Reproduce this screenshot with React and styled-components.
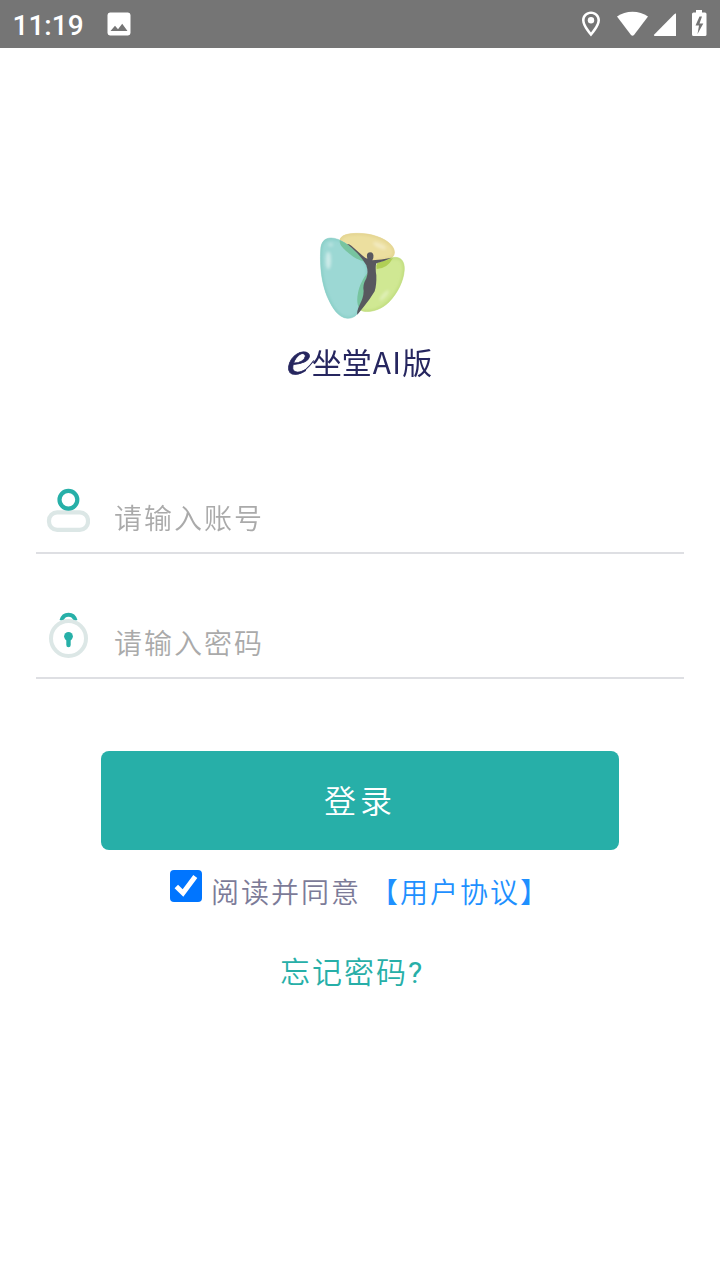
import React, { useState } from "react";
import styled, { createGlobalStyle } from "styled-components";

function Login() {
  const [account, setAccount] = useState("");
  const [password, setPassword] = useState("");
  const [agreed, setAgreed] = useState(true);

  return (
    <Page>
      <GlobalStyle />
      <StatusBar>
        <Clock>11:19</Clock>
        <PictureIcon />
        <SystemIcons />
      </StatusBar>
      <Brand>
        <Logo />
        <BrandName>
          <BrandLetter />
          坐堂<span>AI</span>版
        </BrandName>
      </Brand>
      <Form onSubmit={(e) => e.preventDefault()}>
        <Field>
          <UserIcon />
          <input
            type="text"
            placeholder="请输入账号"
            value={account}
            onChange={(e) => setAccount(e.target.value)}
          />
        </Field>
        <Field>
          <LockIcon />
          <input
            type="password"
            placeholder="请输入密码"
            value={password}
            onChange={(e) => setPassword(e.target.value)}
          />
        </Field>
        <LoginButton type="submit">登录</LoginButton>
        <Agreement>
          <Checkbox
            type="button"
            role="checkbox"
            aria-checked={agreed}
            $checked={agreed}
            onClick={() => setAgreed(!agreed)}
          >
            {agreed && (
              <svg width="32" height="32" viewBox="0 0 32 32">
                <path d="M6.300 16.500L13 23 25.300 6.400" fill="none" stroke="#fff" strokeWidth="5" />
              </svg>
            )}
          </Checkbox>
          <span>阅读并同意</span>
          <a href="#agreement">【用户协议】</a>
        </Agreement>
        <Forgot href="#forgot">
          忘记密码<span>?</span>
        </Forgot>
      </Form>
    </Page>
  );
}

const PictureIcon = () => (
  <svg width="24" height="24" viewBox="0 0 24 24">
    <path
      fill="#fff"
      fillRule="evenodd"
      d="M3 .5h18A2.600 2.600 0 0 1 23.500 3v18a2.600 2.600 0 0 1-2.500 2.500H3A2.600 2.600 0 0 1 .5 21V3A2.600 2.600 0 0 1 3 .5zM3.500 19h17l-5.300-7.200-4.200 5.400-3-3.400z"
    />
  </svg>
);

const SystemIcons = () => (
  <svg width="150" height="48" viewBox="0 0 150 48" fill="#fff">
    <path
      fillRule="evenodd"
      d="M21 11.500c-5 0-9 3.900-9 8.800 0 6.600 9 16.200 9 16.200s9-9.600 9-16.200c0-4.900-4-8.800-9-8.800zm0 2.600c3.500 0 6.400 2.700 6.400 6.200 0 3.900-4 9.300-6.400 12.200-2.400-2.900-6.400-8.300-6.400-12.200 0-3.500 2.900-6.200 6.400-6.200z"
    />
    <circle cx="21" cy="20.300" r="3.200" />
    <path d="M47 16.500C55.500 10 69.500 10 78 16.500L64 35q-1.500 1.500-3 0z" />
    <path d="M106 13.500V36H84.500q-1.200-.5 0-1.800L104 14.500q1.500-1.500 2-1z" />
    <path
      fillRule="evenodd"
      d="M126 10h6v2.500h3q1.500 0 1.500 1.500v20.500q0 1.500-1.500 1.500h-11.500q-1.500 0-1.500-1.500V14q0-1.500 1.500-1.500h2.500zM129.500 16.500L125.500 25.500h3.500l-1.500 8.500 5.800-10.500h-3.800l2.500-7z"
    />
  </svg>
);

const Logo = () => (
  <svg width="115" height="105" viewBox="0 0 345 315">
    <defs>
      <filter id="soft" x="-50%" y="-50%" width="200%" height="200%">
        <feGaussianBlur stdDeviation="4" />
      </filter>
      <clipPath id="tealShape">
        <path d={tealLobe} />
      </clipPath>
      <clipPath id="yellowShape">
        <path d={yellowLobe} />
      </clipPath>
      <clipPath id="greenShape">
        <path d={greenLobe} />
      </clipPath>
    </defs>
    <Lobe d={yellowLobe} clip="yellowShape" fill="#ecdf9f" edge="#e2d28e" />
    <Lobe d={greenLobe} clip="greenShape" fill="#d0e893" edge="#bedb7b" />
    <Lobe d={tealLobe} clip="tealShape" fill="#9cd8d4" edge="#86cdc5" />
    <g clipPath="url(#tealShape)">
      <path d={yellowLobe} fill="#77c49f" />
      <path d={greenLobe} fill="#77c49f" />
    </g>
    <path d="M215 122Q240 117 264 108Q247 140 215 141z" fill="#b0cf55" />
    <g fill="#fff" filter="url(#soft)">
      <ellipse cx="70" cy="115" rx="8" ry="27" opacity=".5" />
      <ellipse cx="77" cy="68" rx="8" ry="6" opacity=".3" />
      <ellipse cx="224" cy="71" rx="22" ry="7" opacity=".35" transform="rotate(24 224 71)" />
      <ellipse cx="238" cy="220" rx="6" ry="20" opacity=".35" transform="rotate(42 238 220)" />
    </g>
    <path
      fill="#58585f"
      d="M126 66Q133 65 140 72L173 101Q181 108 187 110Q182 92 195 91Q208 91 205 108L202 115Q228 113 260 107Q237 118 214 124Q210 137 214 160Q215 190 209 208Q193 235 178 252L157 278Q154 270 164 248Q175 229 176 207Q172 190 184 169Q191 151 184 130Q174 112 157 94Q141 77 126 66z"
    />
  </svg>
);

const Lobe = ({ d, clip, fill, edge }) => (
  <>
    <path d={d} fill={fill} stroke={edge} strokeWidth="1.500" />
    <g clipPath={`url(#${clip})`}>
      <path d={d} fill="none" stroke={edge} strokeWidth="8" filter="url(#soft)" />
    </g>
  </>
);

const tealLobe =
  "M78 48C106 48 139 74 163 99C185 121 191 136 187 157C183 184 176 215 170 247C164 275 148 290 127 289C101 287 82 260 66 222C51 184 44 137 47 84C48 59 60 48 78 48z";
const yellowLobe =
  "M104 57C105 39 129 34 160 34C199 34 239 48 258 68C271 82 272 99 260 107C245 115 217 118 185 119C158 118 124 91 109 72C105 66 104 62 104 57z";
const greenLobe =
  "M271 106C290 106 299 121 298 143C296 176 278 213 252 240C229 263 199 271 176 268C159 265 153 241 159 213C165 180 186 147 214 130C233 118 250 106 271 106z";

const BrandLetter = () => (
  <svg width="24" height="44" viewBox="0 0 24 44" overflow="visible" fill="#26265f">
    <text
      transform="translate(-2 35) skewX(-8) scale(1.060 1)"
      fontFamily="Liberation Serif, serif"
      fontStyle="italic"
      fontSize="47"
      stroke="#26265f"
      strokeWidth=".7"
    >
      e
    </text>
    <path d="M10 34.600Q17 33.500 25.800 21.500" fill="none" stroke="#26265f" strokeWidth="1.100" />
  </svg>
);

const UserIcon = () => (
  <svg width="44" height="48" viewBox="0 0 44 48" fill="none">
    <rect x="3" y="26.300" width="39" height="17.600" rx="8.200" stroke="#dce7e6" strokeWidth="4.200" />
    <circle cx="22.400" cy="13.700" r="8.900" stroke="#27b0a8" strokeWidth="4.200" />
  </svg>
);

const LockIcon = () => (
  <svg width="44" height="48" viewBox="0 0 44 48" fill="none">
    <path d="M15.500 9.500C17.500 1.700 27.500 1.700 29.500 9.500" stroke="#27b0a8" strokeWidth="4" />
    <circle cx="22.500" cy="27.500" r="17.500" stroke="#dce7e6" strokeWidth="4" />
    <circle cx="22.500" cy="25.300" r="4.400" fill="#27b0a8" />
    <path d="M22.500 26v8" stroke="#27b0a8" strokeWidth="4.400" strokeLinecap="round" />
  </svg>
);

const GlobalStyle = createGlobalStyle`
  * {
    box-sizing: border-box;
  }
  body {
    margin: 0;
    background: #fff;
    font-family: "Noto Sans CJK SC", sans-serif;
  }
  svg {
    display: block;
    flex-shrink: 0;
  }
  a {
    text-decoration: none;
  }
`;

const Page = styled.div`
  min-height: 100vh;
  background: #fff;
`;

const StatusBar = styled.header`
  display: flex;
  align-items: center;
  height: 48px;
  padding-left: 12.5px;
  background: #757575;
  > svg:last-child {
    margin-left: auto;
  }
`;

const Clock = styled.span`
  width: 94.5px;
  color: #fff;
  font: 500 28px/48px Roboto, sans-serif;
  padding-top: 3px;
`;

const Brand = styled.div`
  display: flex;
  flex-direction: column;
  align-items: center;
  padding: 174px 0 0 5px;
`;

const BrandName = styled.h1`
  display: flex;
  align-items: center;
  height: 44px;
  margin: 12px 5px 1px 0;
  color: #26265f;
  font-size: 30px;
  font-weight: 400;
  line-height: 44px;
  span {
    margin-left: 1px;
    letter-spacing: 1.2px;
  }
`;

const Form = styled.form`
  display: flex;
  flex-direction: column;
  align-items: center;
  padding: 102px 36px 0;
`;

const Field = styled.label`
  display: flex;
  width: 100%;
  height: 68px;
  margin-bottom: 57px;
  padding-left: 10px;
  border-bottom: 2px solid #dedfe3;
  input {
    flex: 1;
    height: 62px;
    margin-left: 24px;
    padding: 0;
    border: 0;
    outline: 0;
    background: transparent;
    color: #333;
    font: 350 28px/40px "Noto Sans CJK SC", sans-serif;
    letter-spacing: 2px;
  }
  input::placeholder {
    color: #aaa;
  }
`;

const LoginButton = styled.button`
  width: 518px;
  height: 99px;
  margin-top: 15px;
  padding: 0 0 4px;
  border: 0;
  border-radius: 8px;
  background: #27afa8;
  color: #fff;
  font: 350 32px/48px "Noto Sans CJK SC", sans-serif;
  letter-spacing: 4px;
  cursor: pointer;
`;

const Agreement = styled.div`
  display: flex;
  align-self: flex-start;
  margin: 20px 0 0 134px;
  color: #7c7b98;
  font-size: 28px;
  font-weight: 350;
  line-height: 42px;
  letter-spacing: 2px;
  span {
    margin-left: 9px;
  }
  a {
    margin-left: 9px;
    color: #1e90ff;
  }
`;

const Checkbox = styled.button`
  width: 32px;
  height: 32px;
  padding: 0;
  border: ${({ $checked }) => ($checked ? "0" : "2px solid #767676")};
  border-radius: 4px;
  background: ${({ $checked }) => ($checked ? "#0075ff" : "#fff")};
`;

const Forgot = styled.a`
  align-self: flex-start;
  margin: 36px 0 0 244px;
  color: #27afa8;
  font-size: 30px;
  font-weight: 350;
  line-height: 44px;
  letter-spacing: 2px;
  span {
    font-family: Roboto, sans-serif;
    font-weight: 400;
  }
`;

export default Login;
